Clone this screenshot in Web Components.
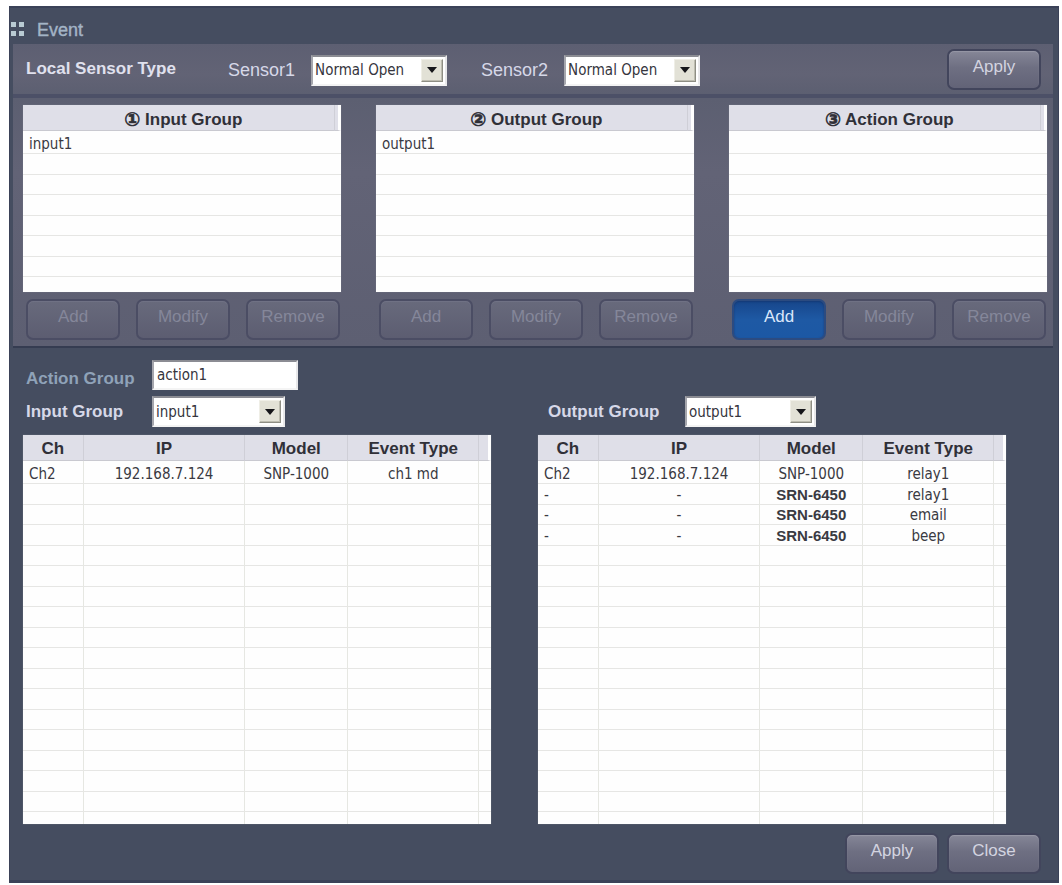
<!DOCTYPE html>
<html lang="en">
<head>
<meta charset="utf-8">
<title>Event</title>
<style>
  body {
    margin: 0;
    padding: 6px 3px 2px 9px;
    background: #fff;
    font-family: "Liberation Sans", Arial, sans-serif;
    font-size: 17px;
    line-height: 20px;
  }
</style>
</head>
<body>
<event-window></event-window>

<script>
  const UI = '"DejaVu Sans Condensed", "DejaVu Sans", sans-serif';
  const html = String.raw;
  const define = (name, render, ready) => customElements.define(name, class extends HTMLElement {
    constructor() {
      super();
      this.attachShadow({ mode: 'open' });
    }
    connectedCallback() {
      this.shadowRoot.innerHTML = render(this);
      if (ready) ready(this.shadowRoot, this);
    }
  });
  const attr = (el, name) => el.getAttribute(name) || '';

  /* Rounded push button; variants: primary, disabled */
  define('ev-button', el => html`
    <style>
      :host { display: block; width: 94px; }
      button {
        box-sizing: border-box; width: 100%; height: 41px; padding: 0 0 5px;
        font: 17px/20px "Liberation Sans", Arial, sans-serif; color: #d3d4e0;
        border: 2px solid #42455c; border-radius: 7px;
        background: linear-gradient(#858697, #6e6f82 45%, #626377);
        box-shadow: inset 0 1px 1px #9697a6;
      }
      button:disabled {
        color: #85879a; border-color: #4b4d64;
        background: linear-gradient(#686a7c, #5c5d71);
        box-shadow: inset 0 1px 1px #717386;
      }
      :host([primary]) button {
        color: #d9e6fa; border-color: #2c4b80;
        background: linear-gradient(#17468b, #1e59a4 50%, #1c58a4);
        box-shadow: inset 0 1px 2px #143a75;
      }
    </style>
    <button type="button" ${el.hasAttribute('disabled') ? 'disabled' : ''}><slot></slot></button>`);

  /* Label followed by a sunken drop-down */
  define('ev-select', el => html`
    <style>
      :host { display: flex; align-items: center; color: #d6d8e8; }
      label { width: var(--label-width, auto); margin-right: var(--label-gap, 0); font-weight: var(--label-weight, normal); }
      .box { display: grid; width: var(--box-width, 136px); height: 31px; }
      select {
        grid-area: 1 / 1; appearance: none; box-sizing: border-box; width: 100%; height: 31px;
        margin: 0; padding: 0 26px 0 2px; border: 2px solid; border-color: #8b8c93 #e8e8ea #f4f4f4 #a5a6ad;
        border-radius: 0; background: #fff; color: #35353d; font: 15px/20px ${UI};
      }
      .arrow {
        grid-area: 1 / 1; place-self: center end; margin-right: 4px; width: 22px; height: 23px; box-sizing: border-box;
        display: grid; place-items: center; pointer-events: none;
        background: #e2e1d6; border: 1px solid; border-color: #efeee6 #8e8e84 #8e8e84 #efeee6;
        box-shadow: inset -1px -1px 0 #bdbcb0;
      }
    </style>
    <label for="s">${attr(el, 'label')}</label>
    <span class="box">
      <select id="s"><option>${attr(el, 'value')}</option></select>
      <span class="arrow"><svg width="10" height="6" viewBox="0 0 10 6" aria-hidden="true"><path d="M0 0h10L5 6z" fill="#16161a"/></svg></span>
    </span>`);

  define('ev-textbox', el => html`
    <style>
      :host { display: flex; align-items: center; color: #8fa2b8; font-weight: bold; }
      label { width: 126px; padding-top: 8px; }
      input {
        box-sizing: border-box; width: 146px; height: 30px; margin: 0; padding: 0 2px 0 3px;
        border: 2px solid; border-color: #8b8c93 #e8e8ea #f4f4f4 #a5a6ad; border-radius: 0;
        background: #fff; color: #35353d; font: 15px/20px ${UI};
      }
    </style>
    <label for="t">${attr(el, 'label')}</label>
    <input id="t" type="text" value="${attr(el, 'value')}">`);

  /* Ruled data grid padded with blank rows up to the "lines" count */
  define('ev-grid', el => {
    const heads = attr(el, 'heads').split('|');
    const rows = attr(el, 'rows').split(';').filter(Boolean).map(r => r.split('|'));
    const widths = attr(el, 'widths').split(' ');
    while (rows.length < Number(attr(el, 'lines'))) rows.push(heads.map(() => ''));
    const cell = t => /^SRN/.test(t) ? html`<td class="strong">${t}</td>` : html`<td>${t}</td>`;
    return html`
    <style>
      :host { display: block; background: #fefefe; box-shadow: 0 0 1px #7d8290; }
      table { width: 100%; table-layout: fixed; border-collapse: separate; border-spacing: 0; }
      th, td { padding: 0; white-space: nowrap; text-align: center; box-sizing: border-box; }
      th {
        height: 26px; color: #303038; font: bold 17px/20px "Liberation Sans", Arial, sans-serif;
        padding-top: 3px; background: #dfdfe8; border-bottom: 1px solid #c9c9d0; border-right: 1px solid #cfcfd7;
      }
      td {
        height: 20px; color: #3a3a42; font: 15px/18px ${UI}; vertical-align: bottom;
        border-bottom: 1px solid #e6e6e4; border-right: 1px solid #e6e7e2;
      }
      tbody tr:nth-child(even) td { height: 21px; }
      tbody tr:first-child td { height: 23px; }
      tbody tr:last-child td { height: 12px; border-bottom: 0; line-height: 10px; }
      td:first-child { text-align: left; padding-left: 6px; }
      th:last-child, td:last-child { border-right: 0; }
      th:last-child { border-right: 3px solid #fefefe; }
      :host([list]) th:first-child { padding-left: 10px; }
      :host([list]) td { border-right: 0; }
      :host([list]) tbody tr:last-child td { height: 15px; }
      .strong { font: bold 15px/18px "Liberation Sans", Arial, sans-serif; }
      .num { font: bold 19px/20px "DejaVu Sans", sans-serif; vertical-align: -1px; -webkit-text-stroke: 0.6px; }
    </style>
    <table>
      <colgroup>${widths.map(w => html`<col style="width:${w}">`).join('')}<col></colgroup>
      <thead><tr>${heads.map(h => html`<th scope="col">${h.replace(/^[①②③]/, '<span class="num">$&</span>')}</th>`).join('')}<th></th></tr></thead>
      <tbody>${rows.map(r => html`<tr>${r.map(cell).join('')}<td></td></tr>`).join('')}</tbody>
    </table>`;
  });

  /* List with its Add / Modify / Remove buttons */
  define('ev-group', el => html`
    <style>
      :host { display: block; min-width: 0; }
      .actions { display: flex; gap: 16px; padding: 7px 0 0 3px; }
    </style>
    <ev-grid list heads="${attr(el, 'head')}" rows="${attr(el, 'rows')}" lines="8" widths="98%"></ev-grid>
    <div class="actions">
      <ev-button ${el.hasAttribute('active') ? 'primary' : 'disabled'}>Add</ev-button>
      <ev-button disabled>Modify</ev-button>
      <ev-button disabled>Remove</ev-button>
    </div>`);

  define('ev-titlebar', () => html`
    <style>
      :host { display: flex; align-items: center; gap: 11px; height: 37px; padding-top: 9px; box-sizing: border-box; color: #a3b4c6; }
      h1 { margin: 0; font: 18px/20px "Liberation Sans", Arial, sans-serif; -webkit-text-stroke: 0.4px; }
      svg { display: block; }
    </style>
    <svg width="16" height="18" viewBox="0 0 16 18" aria-hidden="true" fill="#b9cbd3">
      <rect x="1" y="1" width="5" height="5"/><rect x="9" y="1" width="5" height="5"/>
      <rect x="1" y="10" width="5" height="5"/><rect x="9" y="10" width="5" height="5"/>
    </svg>
    <h1><slot></slot></h1>`);

  define('event-window', () => html`
    <style>
      :host {
        display: block; box-sizing: border-box; background: #454d60;
        border: solid #3b4258; border-width: 2px 1px 3px;
      }
      ev-titlebar { margin-top: -1px; }
      .sensors {
        display: flex; align-items: center; height: 50px; margin: 0 5px 0 3px; padding: 0 12px 0 13px;
        box-sizing: border-box; color: #e0e1ee; background: linear-gradient(#5d5f72, #626375 60%, #5c5f71);
      }
      .sensors strong { width: 202px; }
      .sensors ev-select { margin-right: 34px; padding-top: 2px; font-size: 18px; --label-gap: 16px; }
      .sensors ev-button { margin-left: auto; }
      .groups {
        display: grid; grid-template-columns: repeat(3, minmax(0, 1fr)); gap: 35px;
        margin: 0 5px 0 3px; padding: 7px 6px 6px 10px; border-top: 4px solid #4c5067; border-bottom: 2px solid #353c51;
        background: linear-gradient(#5c5f71, #626376 30%, #5d5f72);
      }
      .detail { padding: 12px 52px 0 13px; }
      .detail ev-textbox { padding-left: 3px; }
      .columns { display: grid; grid-template-columns: repeat(2, minmax(0, 1fr)); gap: 47px; padding-top: 6px; }
      .columns ev-select { --label-weight: bold; padding: 0 0 8px 3px; --label-width: 126px; --box-width: 133px; }
      .columns .out ev-select { padding-left: 10px; --label-width: 137px; --box-width: 131px; }
      footer { display: flex; justify-content: flex-end; gap: 8px; padding: 9px 17px 6px; }
    </style>
    <ev-titlebar>Event</ev-titlebar>
    <section class="sensors">
      <strong>Local Sensor Type</strong>
      <ev-select label="Sensor1" value="Normal Open"></ev-select>
      <ev-select label="Sensor2" value="Normal Open"></ev-select>
      <ev-button>Apply</ev-button>
    </section>
    <section class="groups">
      <ev-group head="① Input Group" rows="input1"></ev-group>
      <ev-group head="② Output Group" rows="output1"></ev-group>
      <ev-group head="③ Action Group" active></ev-group>
    </section>
    <section class="detail">
      <ev-textbox label="Action Group" value="action1"></ev-textbox>
      <div class="columns">
        <div>
          <ev-select label="Input Group" value="input1"></ev-select>
          <ev-grid heads="Ch|IP|Model|Event Type" widths="13% 34.5% 22% 28%" lines="18"
            rows="Ch2|192.168.7.124|SNP-1000|ch1 md"></ev-grid>
        </div>
        <div class="out">
          <ev-select label="Output Group" value="output1"></ev-select>
          <ev-grid heads="Ch|IP|Model|Event Type" widths="13% 34.5% 22% 28%" lines="18"
            rows="Ch2|192.168.7.124|SNP-1000|relay1;-|-|SRN-6450|relay1;-|-|SRN-6450|email;-|-|SRN-6450|beep"></ev-grid>
        </div>
      </div>
    </section>
    <footer>
      <ev-button>Apply</ev-button>
      <ev-button>Close</ev-button>
    </footer>`);
</script>
</body>
</html>
